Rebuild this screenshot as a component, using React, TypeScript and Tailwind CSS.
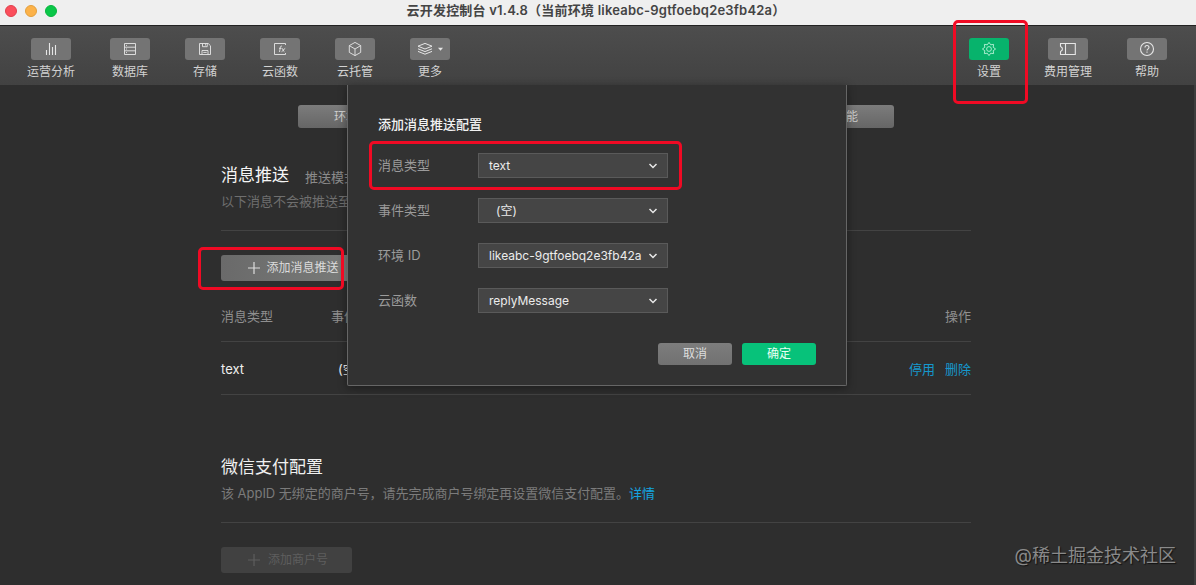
import { ReactNode } from 'react';
import { clsx } from 'clsx';

interface ToolItem {
  label: string;
  icon: ReactNode;
  active?: boolean;
}

const svgProps = {
  width: 16,
  height: 16,
  viewBox: '0 0 16 16',
  fill: 'none',
  stroke: 'currentColor',
  strokeWidth: 0.9,
};

const ChartIcon = () => (
  <svg {...svgProps}>
    <path d="M3.5 9v5M6.5 2v12M9.5 6v8M12.5 4v10" strokeWidth={1.1} />
  </svg>
);

const DatabaseIcon = () => (
  <svg {...svgProps}>
    <path d="M2.5 2.5h11v11h-11zM2.5 6.2h11M2.5 9.8h11" />
    <path d="M4 4.4h1M4 8h1M4 11.6h1" />
  </svg>
);

const SaveIcon = () => (
  <svg {...svgProps}>
    <path d="M2.5 2.5h8.7l2.3 2.3v8.7h-11z" />
    <path d="M5.5 2.5v3.2h4.7V2.5M8.5 3.2v1.3M5 13.5V9.5h6v4M6.3 11.4h3.4" />
  </svg>
);

const FunctionIcon = () => (
  <svg {...svgProps}>
    <path d="M13.5 4V2.5h-11v11h11V12" />
    <path d="M10 5.2C8.8 4.8 8.4 5.6 8.3 6.6L7.5 11M7 7.3h2.6M10 7.3c1 0 1.2 3.4 2.4 3.4M13.2 7.3c-1 0-2.4 3.4-3.6 3.4" />
  </svg>
);

const CubeIcon = () => (
  <svg {...svgProps}>
    <path d="M8 1.4l5.7 3.2v6.8L8 14.6l-5.7-3.2V4.6zM2.3 4.6L8 8l5.7-3.4M8 8v6.6" />
  </svg>
);

const LayersIcon = () => (
  <svg width="27" height="16" viewBox="0 0 27 16" fill="none" stroke="currentColor" strokeWidth={1}>
    <path d="M1 5.2L8 2.4l7 2.8L8 8zM1 7.8l7 2.8 7-2.8M1 10.4l7 2.8 7-2.8" />
    <path d="M21 6.8h5l-2.5 3z" fill="currentColor" stroke="none" />
  </svg>
);

const GearIcon = () => (
  <svg {...svgProps}>
    <path d="M8 1.4l1.7 2.4 2.9-.4-.4 2.9L14.6 8l-2.4 1.7.4 2.9-2.9-.4L8 14.6l-1.7-2.4-2.9.4.4-2.9L1.4 8l2.4-1.7-.4-2.9 2.9.4z" />
    <circle cx="8" cy="8" r="2.4" />
  </svg>
);

const TicketIcon = () => (
  <svg width="18" height="16" viewBox="0 0 18 16" fill="none" stroke="currentColor" strokeWidth={1.1}>
    <path d="M1.5 2.5h14.8v11H1.5v-2.8L3.3 9V7L1.5 5.3zM6.5 2.5v11" />
  </svg>
);

const HelpIcon = () => (
  <svg {...svgProps}>
    <circle cx="8" cy="8" r="6.5" strokeWidth={1.1} />
    <path d="M6 6.5c0-2.6 4-2.6 4 0C10 7.8 8 7.9 8 9.6M8 10.6v1.2" strokeWidth={1.1} />
  </svg>
);

const PlusIcon = () => (
  <svg width="12" height="12" viewBox="0 0 12 12" stroke="currentColor" strokeWidth={1.2}>
    <path d="M6 0v12M0 6h12" />
  </svg>
);

const mainTools: ToolItem[] = [
  { label: '运营分析', icon: <ChartIcon /> },
  { label: '数据库', icon: <DatabaseIcon /> },
  { label: '存储', icon: <SaveIcon /> },
  { label: '云函数', icon: <FunctionIcon /> },
  { label: '云托管', icon: <CubeIcon /> },
  { label: '更多', icon: <LayersIcon /> },
];

const sideTools: ToolItem[] = [
  { label: '设置', icon: <GearIcon />, active: true },
  { label: '费用管理', icon: <TicketIcon /> },
  { label: '帮助', icon: <HelpIcon /> },
];

const fields = [
  { label: '消息类型', value: 'text' },
  { label: '事件类型', value: '(空)', indent: true },
  { label: '环境 ID', value: 'likeabc-9gtfoebq2e3fb42a' },
  { label: '云函数', value: 'replyMessage' },
];

function ToolButton({ label, icon, active }: ToolItem) {
  return (
    <div className="flex w-10 flex-col items-center">
      <div
        className={clsx(
          'flex h-[22px] w-10 items-center justify-center rounded-[3px]',
          active ? 'bg-[#07b36c] text-[#b9f3d8]' : 'bg-[#747474] text-[#e6e6e6]'
        )}
      >
        {icon}
      </div>
      <span className="mt-[3px] text-xs leading-[18px] whitespace-nowrap text-[#d2d2d2]">{label}</span>
    </div>
  );
}

function TitleBar() {
  return (
    <div className="relative flex h-[26px] shrink-0 items-start justify-center border-b border-[#222] bg-[#efefef]">
      <div className="absolute top-[5px] left-[5px] flex gap-2">
        <span className="size-3 rounded-full border border-[#e0404c] bg-[#fb4e5b]" />
        <span className="size-3 rounded-full border border-[#e3a03c] bg-[#fcb249]" />
        <span className="size-3 rounded-full border border-[#08b53e] bg-[#0ac748]" />
      </div>
      <span className="mr-1 text-[13px] leading-[21px] font-semibold tracking-[0.21px] whitespace-nowrap text-[#444]">
        云开发控制台 v1.4.8（当前环境 likeabc-9gtfoebq2e3fb42a）
      </span>
    </div>
  );
}

function SelectField({ label, value, indent }: { label: string; value: string; indent?: boolean }) {
  return (
    <div className="flex h-[25px] items-center">
      <span className="w-[100px] text-[13px] text-[#9b9b9b]">{label}</span>
      <div className="flex h-[25px] w-[190px] items-center justify-between border border-[#5a5a5a] bg-[#454545] pr-[9px] pl-[10px]">
        <span className={clsx('text-xs whitespace-nowrap text-[#ececec]', indent && 'pl-[7px]')}>{value}</span>
        <svg width="10" height="8" viewBox="0 0 10 8" fill="none" stroke="#e8e8e8" strokeWidth={1.5}>
          <path d="M1.5 2L5 5.5 8.5 2" />
        </svg>
      </div>
    </div>
  );
}

function PushConfigDialog() {
  return (
    <div className="absolute top-0 left-[347px] h-[301px] w-[500px] rounded-b-[2px] border border-t-0 border-[#666] bg-[#323232] px-[30px] pt-[29px] shadow-[0_2px_10px_rgba(0,0,0,0.4)]">
      <h2 className="text-[13px] leading-5 font-medium text-[#f2f2f2]">添加消息推送配置</h2>
      <div className="mt-[19px] flex flex-col gap-5">
        {fields.map((f) => (
          <SelectField key={f.label} {...f} />
        ))}
      </div>
      <div className="mt-[30px] flex justify-end gap-[10px]">
        <button className="h-[22px] w-[74px] rounded-[3px] bg-linear-to-b from-[#7d7d7d] to-[#717171] text-xs text-[#dedede]">
          取消
        </button>
        <button className="h-[22px] w-[74px] rounded-[3px] bg-[#07c27a] text-xs text-[#e8fff4]">确定</button>
      </div>
      {/* highlight around the message type row */}
      <div className="absolute top-[56px] left-[21px] h-[49px] w-[313px] rounded-[5px] border-3 border-[#f00a24]" />
    </div>
  );
}

export default function App() {
  return (
    <div className="relative flex h-[585px] w-[1196px] flex-col overflow-hidden bg-[#2e2e2e] font-['Inter','Noto_Sans_CJK_SC',sans-serif]">
      <TitleBar />
      <div className="flex h-[59px] shrink-0 justify-between bg-linear-to-b from-[#4d4d4d] to-[#424242] pt-3 pr-[29px] pl-[31px]">
        <div className="flex gap-[35px] *:first:mr-1">
          {mainTools.map((t) => (
            <ToolButton key={t.label} {...t} />
          ))}
        </div>
        <div className="flex gap-[39px]">
          {sideTools.map((t) => (
            <ToolButton key={t.label} {...t} />
          ))}
        </div>
      </div>

      <div className="relative h-[500px] border-r-2 border-[#3d3d3d]">
        <main className="ml-[221px] flex w-[750px] flex-col pt-5 text-[13px]">
          <div className="ml-[77px] flex h-[23px] w-[596px] items-center justify-between rounded-[3px] bg-linear-to-b from-[#7c7c7c] to-[#666] pr-9 pl-9 text-xs text-[#d0d0d0]">
            <span>环境</span>
            <span>功能</span>
          </div>

          <section className="h-[103px] border-b border-[#434343] pt-[35px]">
            <div className="flex h-6 gap-4">
              <h1 className="text-[17px] leading-6 text-[#f5f5f5]">消息推送</h1>
              <span className="pt-1 leading-5 text-[#8b8b8b]">推送模式</span>
            </div>
            <p className="mt-1 leading-5 text-[#6f6f6f]">以下消息不会被推送至</p>
          </section>

          <button className="mt-6 flex h-[26px] w-[145px] items-center justify-center gap-[6px] rounded-[3px] bg-linear-to-r from-[#6a6a6a] to-[#7b7d7b] text-xs text-[#dcdcdc]">
            <PlusIcon />
            添加消息推送
          </button>

          <div className="flex h-[61px] items-center justify-between border-b border-[#434343] pt-[11px] text-[#8f8f8f]">
            <span className="w-[110px]">消息类型</span>
            <span className="flex-1">事件</span>
            <span>操作</span>
          </div>
          <div className="flex h-[53px] items-center border-b border-[#434343] pt-[3px] text-[#eee]">
            <span className="w-[110px]">text</span>
            <span className="flex-1 pl-[7px]">(空)</span>
            <span className="flex gap-[10px] text-[#1598cd]">
              <a>停用</a>
              <a>删除</a>
            </span>
          </div>

          <section className="h-[128px] border-b border-[#434343] pt-[60px]">
            <h1 className="text-[17px] leading-6 text-[#f0f0f0]">微信支付配置</h1>
            <p className="mt-1 leading-5 tracking-[-0.03px] text-[#7b7b7b]">
              该 AppID 无绑定的商户号，请先完成商户号绑定再设置微信支付配置。
              <a className="text-[#14a5e0]">详情</a>
            </p>
          </section>

          <button className="mt-6 flex h-[26px] w-[131px] items-center gap-2 rounded-[3px] bg-[#414141] pl-[27px] text-xs text-[#5e5e5e]">
            <PlusIcon />
            添加商户号
          </button>
        </main>

        <PushConfigDialog />
      </div>

      {/* highlights over the settings tool and the add button */}
      <div className="absolute top-[20px] left-[953px] h-[84px] w-[75px] rounded-[5px] border-3 border-[#f00a24]" />
      <div className="absolute top-[247px] left-[198px] h-[43px] w-[146px] rounded-[5px] border-3 border-[#f00a24]" />
      <span className="absolute right-5 bottom-4 text-[18px] leading-[26px] text-[#8a8a8a] [text-shadow:1px_1px_1px_#111]">
        @稀土掘金技术社区
      </span>
    </div>
  );
}
